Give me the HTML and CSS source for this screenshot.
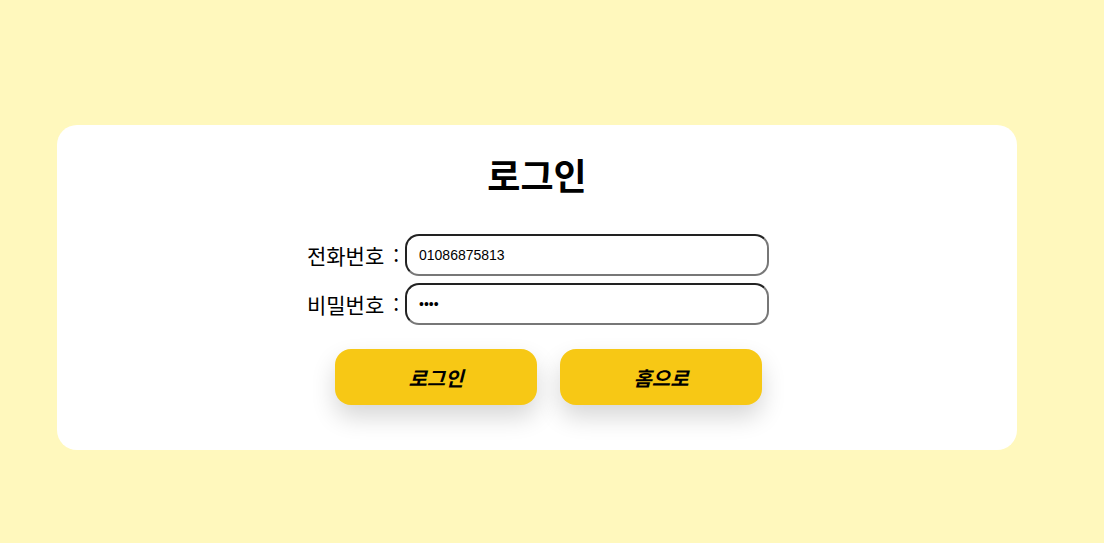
FILE: index.html
```html
<!DOCTYPE html>
<html lang="ko">
<head>
<meta charset="utf-8">
<link rel="stylesheet" href="styles.css">
</head>
<body>
<div class="page">
  <div class="card">
    <h1 class="title">로그인</h1>
    <form class="form">
      <div class="row">
        <label class="label">전화번호 :</label>
        <input class="input" type="text" value="01086875813">
      </div>
      <div class="row">
        <label class="label">비밀번호 :</label>
        <input class="input pw" type="password" value="1234">
      </div>
      <div class="buttons">
        <button type="button" class="btn">로그인</button>
        <button type="button" class="btn">홈으로</button>
      </div>
    </form>
  </div>
</div>
</body>
</html>
```
FILE: styles.css
```css
html, body {
  margin: 0;
  padding: 0;
  background: #fff8bd;
}
body {
  font-family: "Noto Sans CJK KR", "Noto Sans", sans-serif;
  color: #000;
}
.page {
  padding: 125px 87px 0 57px;
}
.card {
  width: 960px;
  height: 325px;
  box-sizing: border-box;
  background: #fff;
  border-radius: 20px;
  display: flex;
  flex-direction: column;
  align-items: center;
  padding: 24px 0 0;
}
.title {
  margin: 0;
  font-size: 36px;
  font-weight: 700;
  line-height: 50px;
}
.form {
  margin-top: 35px;
  display: flex;
  flex-direction: column;
  align-items: center;
}
.row {
  display: flex;
  align-items: center;
  margin-bottom: 7px;
}
.label {
  font-size: 21px;
  width: 94px;
  white-space: nowrap;
  text-align: right;
  margin-right: 6px;
  line-height: 28px;
  word-spacing: 3px;
}
.input {
  width: 364px;
  height: 42px;
  box-sizing: border-box;
  border: 2px solid #222;
  border-right-color: #777;
  border-bottom-color: #777;
  border-radius: 14px;
  padding: 0 12px;
  font-family: "Liberation Sans", Arial, sans-serif;
  font-size: 14px;
  outline: none;
  background: #fff;
  color: #000;
}
.buttons {
  display: flex;
  gap: 23px;
  margin-top: 17px;
  padding-left: 23px;
}
.btn {
  width: 202px;
  height: 56px;
  border: none;
  border-radius: 16px;
  background: #f7c815;
  box-shadow: 0 12px 24px rgba(0, 0, 0, 0.16);
  font-family: "Noto Sans CJK KR", sans-serif;
  font-size: 20px;
  font-weight: 700;
  font-style: italic;
  color: #000;
  cursor: pointer;
}
```
